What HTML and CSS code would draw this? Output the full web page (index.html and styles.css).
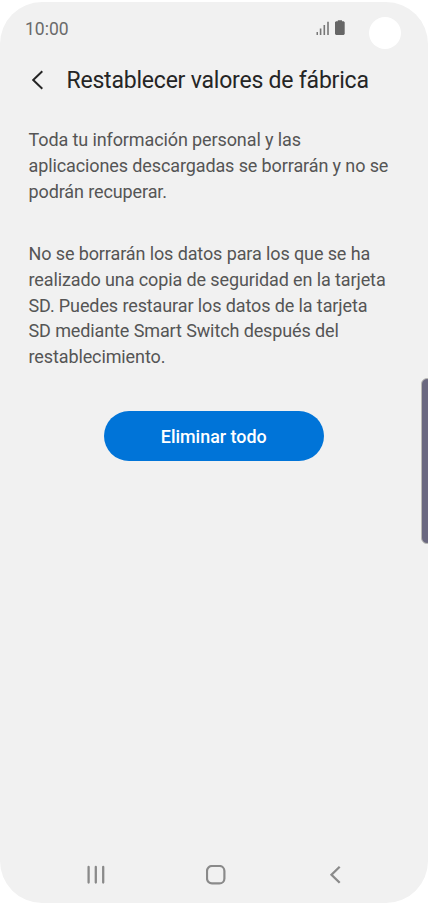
FILE: index.html
```html
<!DOCTYPE html>
<html lang="es">
<head>
<meta charset="utf-8">
<title>Restablecer valores de fábrica</title>
<link rel="stylesheet" href="styles.css">
</head>
<body>
<main class="phone">
  <div class="status">
    <span class="clock">10:00</span>
    <svg class="signal" width="30" height="16" viewBox="0 0 30 16"><path d="M.5 12h1.500v3H.5zM3.800 8.500h1.600V15H3.800zM7.500 5h1.600v10H7.500zM11.200 1.700h1.600V15h-1.600z" fill="#777"/><path d="M20 1.300h1.800V.2h4.200v1.100h1.700l1 1V14l-1 1H20l-1-1V2.300z" fill="#666"/></svg>
    <span class="camera"></span>
  </div>
  <header class="header">
    <svg class="back" width="14" height="20" viewBox="0 0 14 20"><path d="M12.300 1.300 3.200 10l9.100 8.700" fill="none" stroke="#252525" stroke-width="2"/></svg>
    <h1 class="title">Restablecer valores de fábrica</h1>
  </header>
  <section class="content">
    <p class="text">Toda tu información personal y las<br>aplicaciones descargadas se borrarán y no se<br>podrán recuperar.</p>
    <p class="text">No se borrarán los datos para los que se ha<br>realizado una copia de seguridad en la tarjeta<br>SD. Puedes restaurar los datos de la tarjeta<br>SD mediante Smart Switch después del<br>restablecimiento.</p>
    <button class="action">Eliminar todo</button>
  </section>
  <nav class="nav">
    <svg width="20" height="20" viewBox="0 0 20 20"><path d="M2.600 2v15.500M9.800 2v15.500M17.200 2v15.500" stroke="#8a8a8a" stroke-width="2.300" stroke-linecap="round"/></svg>
    <svg width="20" height="20" viewBox="0 0 20 20"><rect x="1" y="1" width="17.400" height="17.400" rx="5" fill="none" stroke="#8a8a8a" stroke-width="2.200"/></svg>
    <svg width="20" height="20" viewBox="0 0 20 20"><path d="m13.700 1.800-8.200 8 8.200 8" fill="none" stroke="#8a8a8a" stroke-width="2.300"/></svg>
  </nav>
  <span class="edge"></span>
</main>
</body>
</html>
```
FILE: styles.css
```css
html { background: #fff; }
body { display: flow-root; margin: 0; font-family: Roboto, sans-serif; }
.phone { position: relative; box-sizing: border-box; width: 428px; height: 901px; margin-top: 2px; padding-top: 8px; display: flex; flex-direction: column; background: #f1f1f1; border-radius: 42px; overflow: hidden; }
.status { display: flex; align-items: center; height: 38px; padding: 0 27.500px 0 25px; }
.clock { flex: 1; font-size: 17.500px; color: #6a6a6a; }
.signal { margin: -2px 22.500px 0 0; }
.camera { width: 32px; height: 32px; margin-top: 8px; border-radius: 50%; background: #fff; }
.header { display: flex; align-items: center; height: 64px; padding-left: 29.500px; }
.title { margin: 1px 0 0 23px; font-size: 23px; letter-spacing: -0.210px; font-weight: 400; color: #252525; white-space: nowrap; }
.content { flex: 1; padding: 15.400px 28px 0 28.500px; }
.text { margin: 0 0 36.300px; font-size: 18px; letter-spacing: -0.110px; line-height: 25.800px; color: #555; white-space: nowrap; }
.action { display: block; width: 220px; height: 50px; margin: 41px auto 0; padding: 1px 1px 0 0; border: 0; border-radius: 25px; background: #0074d8; color: #fff; font: 500 17.900px Roboto, sans-serif; }
.nav { display: flex; justify-content: space-between; padding: 0 82px 18px 86px; }
.edge { position: absolute; right: -5px; top: 376px; box-sizing: border-box; width: 12px; height: 166px; border: 1px solid #b9b9b4; border-radius: 6px; background: #6a6880; }
```
